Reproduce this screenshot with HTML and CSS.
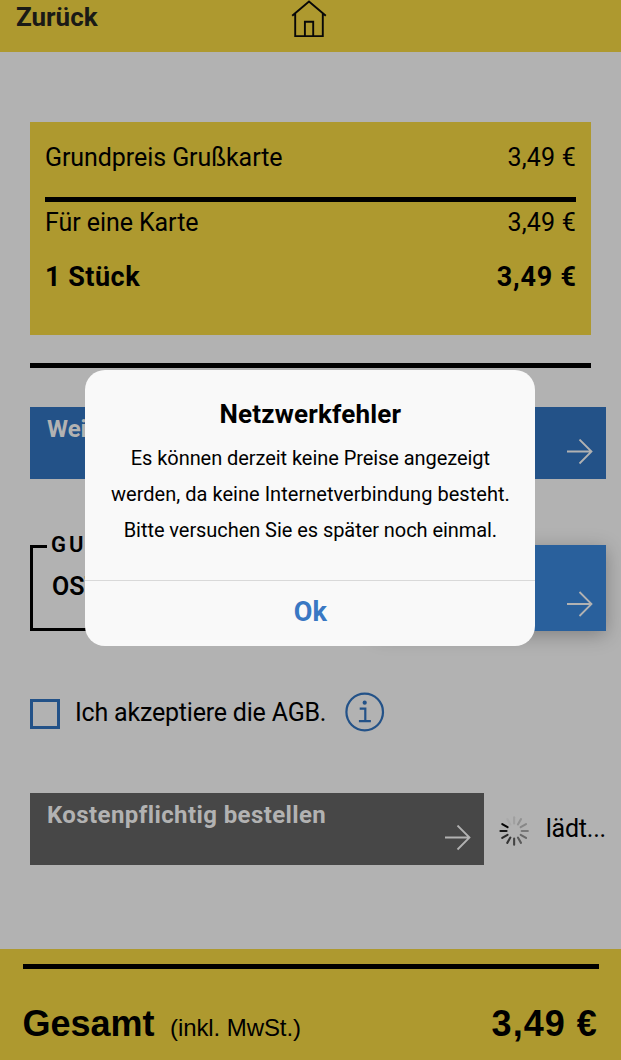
FILE: index.html
```html
<!DOCTYPE html>
<html lang="de">
<head>
<meta charset="utf-8">
<title>Bestellung</title>
<link rel="stylesheet" href="styles.css">
</head>
<body>
<div class="screen">
  <header class="topbar">
    <span class="back">Zurück</span>
    <svg class="home" width="36" height="38" viewBox="0 0 36 38" fill="none" stroke="#080808" stroke-width="1.9"><path d="M1.2 15.8 18 1.5 34.8 15.8M4.2 13.5V36.1H31.8V13.5M13.9 36V21.7H22.2V36"/></svg>
  </header>
  <main class="content">
    <section class="prices">
      <div class="row base"><span class="base-name">Grundpreis Grußkarte</span><span class="price">3,49 €</span></div>
      <div class="row each"><span class="each-name">Für eine Karte</span><span class="price">3,49 €</span></div>
      <div class="row count"><span class="count-name">1 Stück</span><span class="count-price">3,49 €</span></div>
    </section>
    <div class="rule"></div>
    <div class="button next"><span>Wei</span>
      <svg class="arrow" width="26" height="26" viewBox="0 0 26 26"><path d="M0 12.5H25M12.5 .5 24.5 12.5 12.5 24.5"/></svg>
    </div>
    <div class="voucher">
      <fieldset class="code"><legend>GU</legend><span>OST</span></fieldset>
      <div class="button redeem">
        <svg class="arrow" width="26" height="26" viewBox="0 0 26 26"><path d="M0 13H25M12.5 1 24.5 13 12.5 25"/></svg>
      </div>
    </div>
    <div class="terms">
      <span class="checkbox"></span>
      <span class="terms-text">Ich akzeptiere die AGB.</span>
      <svg class="info" width="40" height="40" viewBox="0 0 40 40" fill="none" stroke="#235288"><circle cx="19.7" cy="20" r="18.3" stroke-width="2.2"/><circle cx="19.7" cy="10.7" r="2.1" fill="#235288" stroke="none"/><path d="M14.7 16.7H20.3V29M13.9 29.2H25.9" stroke-width="2.2"/></svg>
    </div>
    <div class="order">
      <div class="button buy"><span>Kostenpflichtig bestellen</span>
        <svg class="arrow" width="26" height="26" viewBox="0 0 26 26"><path d="M0 12.5H25M12.5 .5 24.5 12.5 12.5 24.5"/></svg>
      </div>
      <svg class="spinner" width="32" height="32" viewBox="-16 -16 32 32" stroke-width="2.2" stroke-linecap="round">
        <path d="M0-8V-14.5" stroke="#a0a0a0"/><path d="M0-8V-14.5" stroke="#929292" transform="rotate(30)"/><path d="M0-8V-14.5" stroke="#878787" transform="rotate(60)"/><path d="M0-8V-14.5" stroke="#777" transform="rotate(90)"/><path d="M0-8V-14.5" stroke="#686868" transform="rotate(120)"/><path d="M0-8V-14.5" stroke="#5b5b5b" transform="rotate(150)"/><path d="M0-8V-14.5" stroke="#444" transform="rotate(180)"/><path d="M0-8V-14.5" stroke="#353535" transform="rotate(210)"/><path d="M0-8V-14.5" stroke="#282828" transform="rotate(240)"/><path d="M0-8V-14.5" stroke="#181818" transform="rotate(270)"/><path d="M0-8V-14.5" stroke="#050505" transform="rotate(300)"/><path d="M0-8V-14.5" stroke="#aaa" transform="rotate(330)"/>
      </svg>
      <span class="loading">lädt...</span>
    </div>
  </main>
  <footer class="total">
    <div class="total-row"><span class="total-name">Gesamt</span><span class="vat">(inkl. MwSt.)</span><span class="total-price">3,49 €</span></div>
  </footer>
  <div class="dialog">
    <h1>Netzwerkfehler</h1>
    <p><span class="l1">Es können derzeit keine Preise angezeigt</span><br><span class="l2">werden, da keine Internetverbindung besteht.</span><br><span class="l3">Bitte versuchen Sie es später noch einmal.</span></p>
    <div class="ok"><span>Ok</span></div>
  </div>
</div>
</body>
</html>
```
FILE: styles.css
```css
* { box-sizing: border-box; }
body { margin: 0; font-family: Roboto, sans-serif; color: #000; font-variant-ligatures: none; }
.screen { position: relative; width: 621px; height: 1060px; overflow: hidden; display: flex; flex-direction: column; background: #b2b2b2; white-space: nowrap; }
.topbar { height: 52px; background: #ae992f; display: flex; padding-left: 16px; flex: none; }
.back { width: 275px; font-size: 26px; font-weight: 700; line-height: 34px; color: #1a1a16; }
.content { flex: 1; padding: 70px 15px 0 30px; }
.prices { width: 561px; height: 213px; background: #ae992f; padding: 0 15px; }
.row { display: flex; justify-content: space-between; font-size: 25px; }
.base { height: 80px; line-height: 71px; border-bottom: 5px solid #000; }
.base-name, .each-name { letter-spacing: -.07px; }
.price { letter-spacing: .2px; }
.each { height: 42px; line-height: 41px; }
.count { font-size: 27px; font-weight: 700; line-height: 66px; }
.count-name { letter-spacing: .5px; }
.count-price { letter-spacing: .8px; margin-right: -.8px; }
.rule { width: 561px; height: 5px; margin-top: 28px; background: #000; }
.button { display: flex; justify-content: space-between; color: #b2b2b2; font-size: 24px; font-weight: 700; padding: 0 13px 0 17px; }
.button span { line-height: 44px; letter-spacing: .4px; }
.next span { letter-spacing: 0; }
.arrow { align-self: flex-end; fill: none; stroke: #b2b2b2; stroke-width: 1.8; }
.next { height: 72px; margin-top: 39px; background: #235288; padding-bottom: 14px; }
.voucher { display: flex; margin-top: 66px; height: 86px; }
.code { width: 345px; height: 96px; margin: -10px 0 0; border: 3px solid #000; padding: 0 0 0 19px; font-weight: 600; font-size: 25px; min-width: 0; }
.code legend { width: 150px; height: 23px; margin-left: -5px; padding: 0 4px; font-size: 22px; line-height: 20px; letter-spacing: 3px; }
.code span { display: block; line-height: 57px; }
.redeem { flex: 1; background: #29609c; justify-content: flex-end; padding-bottom: 14px; box-shadow: 0 4px 18px rgba(0,0,0,.28); }
.terms { display: flex; align-items: center; height: 40px; margin-top: 61px; }
.checkbox { width: 30px; height: 30px; margin-top: 4px; border: 3px solid #235288; }
.terms-text { width: 255px; margin-left: 15px; font-size: 25px; letter-spacing: -.2px; }
.info { margin-left: 15px; }
.order { display: flex; align-items: center; height: 72px; margin-top: 61.4px; }
.buy { width: 454.4px; height: 72px; background: #474747; padding-bottom: 14px; flex: none; }
.spinner { margin: 3px 0 0 15px; }
.loading { margin: -2px 0 0 16px; font-size: 25px; letter-spacing: -.2px; }
.total { height: 111px; background: #ae992f; padding: 15px 22.5px 0; font-family: "Liberation Sans", Arial, sans-serif; }
.total-row { border-top: 5px solid #000; display: flex; align-items: baseline; line-height: 110px; width: 576px; }
.total-name { width: 147.5px; font-size: 36px; font-weight: 700; }
.vat { font-size: 24px; letter-spacing: -.08px; }
.total-price { margin-left: auto; font-size: 36px; font-weight: 700; letter-spacing: 1px; margin-right: .8px; }
.dialog { position: absolute; left: 85.4px; top: 370px; width: 450px; height: 276px; border-radius: 20px; background: #f9f9f9; text-align: center; }
.dialog h1 { margin: 25px 0 0; font-size: 26px; line-height: 38px; letter-spacing: .2px; }
.dialog p { margin: 7px 0 0; height: 140px; font-size: 20px; line-height: 36px; }
.l1, .l3 { letter-spacing: -.06px; }
.l2 { letter-spacing: .03px; }
.ok { height: 66px; border-top: 1px solid #d9d9d9; color: #3978c3; font-size: 27px; font-weight: 700; line-height: 62px; }
```
